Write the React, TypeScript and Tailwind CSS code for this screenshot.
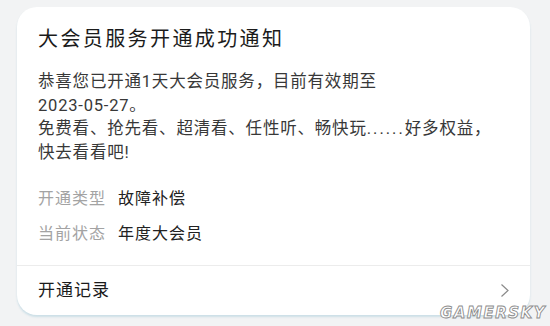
import React from "react";

const font = { fontFamily: 'Roboto, "Noto Sans CJK SC", "Noto Sans", sans-serif' };

export default function App() {
  return (
    <div
      className="relative w-[550px] h-[326px] overflow-hidden bg-[#f2f3f4]"
      style={font}
    >
      <div className="ml-[17px] mt-[7px] w-[513px] h-[308px] rounded-[20px] bg-white shadow-[0_2px_2px_rgba(160,200,215,0.45)] flex flex-col">
        <div className="pl-[21px] pt-[18px] text-[20px] leading-[28px] tracking-[2.4px] text-[#1b1b1b]">
          大会员服务开通成功通知
        </div>
        <div className="pl-[21px] mt-[17px] text-[16.5px] leading-[23.7px] tracking-[0.8px] text-[#383838] whitespace-nowrap">
          <div>恭喜您已开通1天大会员服务，目前有效期至</div>
          <div>2023-05-27。</div>
          <div>
            免费看、抢先看、超清看、任性听、畅快玩<span className="tracking-[2px]">......</span>好多权益，
          </div>
          <div>快去看看吧!</div>
        </div>
        <div className="pl-[21px] mt-[22px] flex flex-col gap-[11px] text-[16px] leading-[24px] tracking-[1px]">
          <div className="flex gap-[12px]">
            <span className="text-[#a3a3a3]">开通类型</span>
            <span className="text-[#222]">故障补偿</span>
          </div>
          <div className="flex gap-[12px]">
            <span className="text-[#a3a3a3]">当前状态</span>
            <span className="text-[#222]">年度大会员</span>
          </div>
        </div>
        <div className="mt-[19px] h-px bg-[#ececec]" />
        <div className="flex-1 flex items-center justify-between pl-[21px] pr-[20px]">
          <span className="text-[17px] tracking-[1px] text-[#1b1b1b]">开通记录</span>
          <svg width="10" height="15" viewBox="0 0 10 15" fill="none">
            <path d="M1.5 1.5 L8 7.5 L1.5 13.5" stroke="#8a8a8a" strokeWidth="1.2" />
          </svg>
        </div>
      </div>
      <div
        className="absolute right-[4px] bottom-[5px] text-[15px] leading-[15px] font-bold italic tracking-[1.5px] text-white [-webkit-text-stroke:0.9px_#8d8d8d]"
        style={{ fontFamily: '"DejaVu Sans", sans-serif' }}
      >
        GAMERSKY
      </div>
    </div>
  );
}
